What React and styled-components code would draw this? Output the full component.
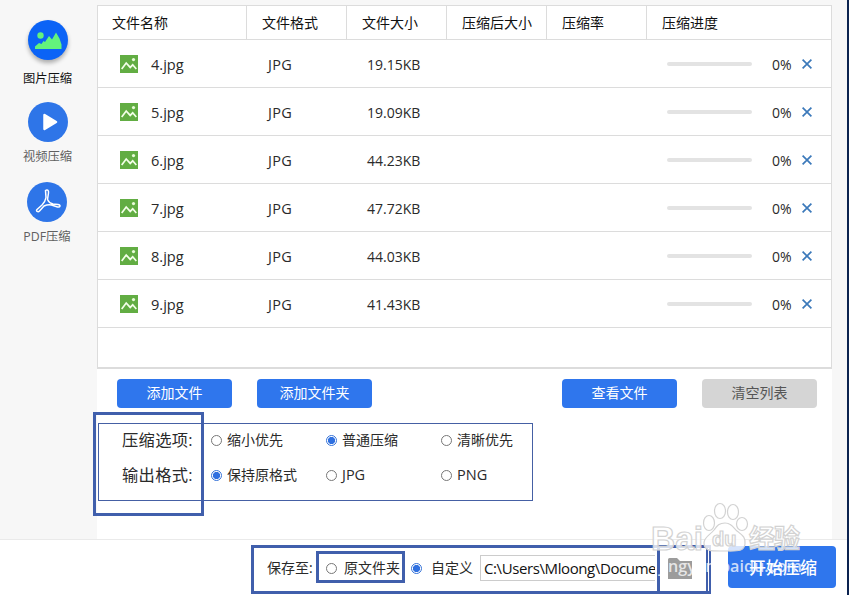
import React from 'react';
import styled, { createGlobalStyle } from 'styled-components';

const GlobalStyle = createGlobalStyle`
  * {
    box-sizing: border-box;
  }

  body {
    margin: 0;
    overflow: hidden;
    color: #2a2a2a;
    font-family: 'Open Sans', 'Noto Sans CJK SC', sans-serif;
    font-size: 14px;
    line-height: 20px;
  }
`;

const Window = styled.div`
  position: relative;
  display: grid;
  grid-template-columns: 97px 735px 15px;
  grid-template-rows: 539px 56px;
  width: 849px;
  height: 595px;
  overflow: hidden;
  background: #f7f7f7;
  border-right: 2px solid #0c2350;
  white-space: nowrap;
`;

const Sidebar = styled.nav`
  padding-top: 20px;
`;

const NavItem = styled.div`
  display: flex;
  flex-direction: column;
  align-items: center;
  height: ${({ $height }) => $height}px;
  padding-right: ${({ $shift }) => $shift || 2}px;
  color: ${({ $active }) => ($active ? '#111' : '#606060')};
  font-size: 12.3px;
`;

const NavIcon = styled.svg`
  display: block;
  width: 40px;
  height: 40px;
  border-radius: 50%;
  background: ${({ $active }) => ($active ? '#0b63f6' : '#2e75e8')};
  box-shadow: ${({ $active }) => ($active ? '0 3px 4px rgba(0, 0, 0, 0.3)' : 'none')};
`;

const NavLabel = styled.span`
  margin-top: ${({ $gap }) => $gap}px;
  line-height: 18px;
`;

const Main = styled.main`
  display: flex;
  flex-direction: column;
  padding-top: 5px;
  background: linear-gradient(#f7f7f7 5px, #fff 5px);
`;

const Table = styled.section`
  height: 364px;
  border: 1px solid #dcdcdc;
  border-bottom-width: 2px;
`;

const HeaderRow = styled.div`
  display: grid;
  grid-template-columns: 149px repeat(4, 100px) 1fr;
  height: 34px;
  border-bottom: 1px solid #dcdcdc;
`;

const HeaderCell = styled.div`
  padding: 7px 0 0 15px;
  color: #111;
  line-height: 20px;
  border-right: 1px solid #dcdcdc;

  &:first-child {
    padding-left: 14px;
  }

  &:last-child {
    border-right: none;
  }
`;

const FileRow = styled.div`
  display: grid;
  grid-template-columns: 31px 117px 99px 300px 105px 30px 10px;
  align-items: center;
  height: 48px;
  padding: 1px 0 0 22px;
  border-bottom: 1px solid #dcdcdc;
`;

const FileIcon = styled.svg`
  display: block;
  width: 18px;
  height: 18px;
`;

const FileName = styled.span`
  font-size: 14.6px;
`;

const FileText = styled.span`
  padding-top: 2px;
  letter-spacing: ${({ $spacing }) => $spacing || 0}px;
  font-size: ${({ $size }) => $size || 14}px;
`;

const Progress = styled.div`
  width: 85px;
  height: 4px;
  margin-top: -1px;
  border-radius: 2px;
  background: #e3e3e3;
`;

const RemoveIcon = styled.svg`
  display: block;
  width: 10px;
  height: 10px;
  stroke: #3b79ba;
  stroke-width: 1.7;
`;

const Toolbar = styled.div`
  display: flex;
  gap: 25px;
  padding: 10px 15px 0 20px;
`;

const Button = styled.button`
  width: 115px;
  height: 29px;
  margin-left: ${({ $push }) => ($push ? 'auto' : 0)};
  padding: 0 0 1px;
  border: none;
  border-radius: 4px;
  background: ${({ $muted }) => ($muted ? '#d5d5d5' : '#2f76ed')};
  color: ${({ $muted }) => ($muted ? '#555' : '#fff')};
  font: inherit;
`;

const Options = styled.section`
  width: 435px;
  height: 78px;
  margin: 15px 0 0 1px;
  padding-left: 23px;
  border: 1px solid #4560a4;
`;

const OptionRow = styled.div`
  display: grid;
  grid-template-columns: 89px 115px 115px 1fr;
  align-items: center;
  height: 35px;
  padding-bottom: 2px;
`;

const OptionTitle = styled.span`
  padding-bottom: 2px;
  font-size: 16.3px;
  letter-spacing: 0.3px;
`;

const RadioLabel = styled.label`
  display: flex;
  align-items: center;
  gap: ${({ $gap }) => $gap || 5}px;
`;

const Dot = styled.span`
  flex: none;
  width: 11px;
  height: 11px;
  border: 1px solid ${({ $on }) => ($on ? '#3472d8' : '#777')};
  border-radius: 50%;
  background: ${({ $on }) => ($on ? 'radial-gradient(circle, #2f70e0 3.2px, #fff 4px)' : '#fff')};
`;

const RadioText = styled.span`
  padding-bottom: ${({ $lift }) => $lift || 0}px;
  font-size: ${({ $latin }) => ($latin ? 14.5 : 14)}px;
`;

const Footer = styled.footer`
  display: flex;
  grid-column: 1 / -1;
  align-items: center;
  padding: 1px 0 0 267px;
  border-top: 1px solid #eaeaea;
  background: #fff;
`;

const SaveLabel = styled.span`
  width: 59px;
`;

const SaveRadio = styled.div`
  width: ${({ $width }) => $width}px;
`;

const PathField = styled.div`
  width: 175px;
  height: 26px;
  padding-left: 3px;
  overflow: hidden;
  border: 1px solid #ccc;
  border-right: none;
  color: #111;
  font-size: 15px;
  letter-spacing: -0.4px;
  line-height: 24px;
`;

const FolderIcon = styled.svg`
  width: 24px;
  height: 21px;
  margin-left: 13px;
  fill: #9c9c9c;
`;

const StartButton = styled.button`
  width: 108px;
  height: 42px;
  margin: -2px 0 0 36px;
  padding: 2px 0 0 2px;
  border: none;
  border-radius: 4px;
  background: #2f76ed;
  color: #fff;
  font: inherit;
  font-size: 17px;
  font-weight: 500;
`;

// Highlight frame drawn over the window content
const Marker = styled.div`
  position: absolute;
  left: ${({ $x }) => $x}px;
  top: ${({ $y }) => $y}px;
  width: ${({ $w }) => $w}px;
  height: ${({ $h }) => $h}px;
  border: 3px solid #405fac;
`;

const MarkerSplit = styled.div`
  position: absolute;
  left: 708px;
  top: 548px;
  width: 1px;
  height: 43px;
  background: #fff;
`;

const Watermark = styled.svg`
  position: absolute;
  left: 640px;
  top: 490px;
  width: 209px;
  height: 105px;
  font-family: 'Liberation Sans', 'Noto Sans CJK SC', sans-serif;
`;

const columns = ['文件名称', '文件格式', '文件大小', '压缩后大小', '压缩率', '压缩进度'];

const files = [
  { name: '4.jpg', size: '19.15KB' },
  { name: '5.jpg', size: '19.09KB' },
  { name: '6.jpg', size: '44.23KB' },
  { name: '7.jpg', size: '47.72KB' },
  { name: '8.jpg', size: '44.03KB' },
  { name: '9.jpg', size: '41.43KB' },
];

const optionRows = [
  { title: '压缩选项:', items: ['缩小优先', '普通压缩', '清晰优先'], selected: 1 },
  { title: '输出格式:', items: ['保持原格式', 'JPG', 'PNG'], selected: 0 },
];

const Radio = ({ label, on, gap, lift }) => (
  <RadioLabel $gap={gap}>
    <Dot $on={on} />
    <RadioText $lift={lift} $latin={/^[A-Z]+$/.test(label)}>{label}</RadioText>
  </RadioLabel>
);

const FileItem = ({ file }) => (
  <FileRow>
    <FileIcon viewBox="0 0 18 18">
      <rect width="18" height="18" fill="#62ad43" />
      <path d="M1.7 14 6.2 8l4 4.4 2.5-2.6 3.6 4.2" fill="none" stroke="#f4ffe9" strokeWidth="1.7" />
      <circle cx="13.5" cy="4.6" r="1.6" fill="#e9fbd9" />
    </FileIcon>
    <FileName>{file.name}</FileName>
    <FileText $size={14.5} $spacing={0.3}>JPG</FileText>
    <FileText>{file.size}</FileText>
    <Progress />
    <FileText>0%</FileText>
    <RemoveIcon viewBox="0 0 10 10">
      <path d="M.6.6 9.4 9.4M9.4.6.6 9.4" />
    </RemoveIcon>
  </FileRow>
);

const App = () => {
  return (
    <Window>
      <GlobalStyle />
      <Sidebar>
        <NavItem $active $height={82}>
          <NavIcon $active viewBox="0 0 40 40">
            <circle cx="12.5" cy="15.5" r="3.2" fill="#63f37c" />
            <path d="M7 29v-2.5l4-3.5 2.5 1 2-3 1.5 1 4-6 3 3.5 4-7 3.5 6 2 6v4.5z" fill="#63f37c" />
          </NavIcon>
          <NavLabel $gap={10}>图片压缩</NavLabel>
        </NavItem>
        <NavItem $height={80}>
          <NavIcon viewBox="0 0 40 40">
            <path d="M16.5 13v14l11.500-7z" fill="#fff" stroke="#fff" strokeWidth="2.5" strokeLinejoin="round" />
          </NavIcon>
          <NavLabel $gap={6}>视频压缩</NavLabel>
        </NavItem>
        <NavItem $height={70} $shift={3}>
          <NavIcon viewBox="0 0 40 40">
            <path
              d="M18.5 8.5c1.5-1.2 3.5-.5 3 2.5l-1 6.5c1 2.5 3 4 5.5 4.5l5 .5c3 .5 2.5 3-.5 2.5l-6-2c-2.5-.7-5-.2-7.5 1l-4.5 5c-1.5 1.5-4 0-2.5-1.5l5-4.5c2-2 3.5-4.5 4-7.5z"
              fill="none"
              stroke="#fff"
              strokeWidth="1.5"
              strokeLinejoin="round"
            />
          </NavIcon>
          <NavLabel $gap={6}>PDF压缩</NavLabel>
        </NavItem>
      </Sidebar>

      <Main>
        <Table>
          <HeaderRow>
            {columns.map((title) => (
              <HeaderCell key={title}>{title}</HeaderCell>
            ))}
          </HeaderRow>
          {files.map((file) => (
            <FileItem key={file.name} file={file} />
          ))}
        </Table>
        <Toolbar>
          <Button>添加文件</Button>
          <Button>添加文件夹</Button>
          <Button $push>查看文件</Button>
          <Button $muted>清空列表</Button>
        </Toolbar>
        <Options>
          {optionRows.map((row) => (
            <OptionRow key={row.title}>
              <OptionTitle>{row.title}</OptionTitle>
              {row.items.map((item, i) => (
                <Radio key={item} label={item} on={i === row.selected} lift={2} />
              ))}
            </OptionRow>
          ))}
        </Options>
      </Main>

      <Footer>
        <SaveLabel>保存至:</SaveLabel>
        <SaveRadio $width={85}>
          <Radio label="原文件夹" gap={7} />
        </SaveRadio>
        <SaveRadio $width={69}>
          <Radio label="自定义" gap={9} on />
        </SaveRadio>
        <PathField>C:\Users\Mloong\Documents</PathField>
        <FolderIcon viewBox="0 0 24 21">
          <path d="M0 1.5Q0 0 1.5 0H9l3 3h12v18H0z" />
        </FolderIcon>
        <StartButton>开始压缩</StartButton>
      </Footer>

      <Marker $x={93} $y={412} $w={111} $h={104} />
      <Marker $x={251} $y={545} $w={460} $h={49} />
      <Marker $x={316} $y={551} $w={89} $h={32} />
      <Marker $x={657} $y={545} $w={52} $h={49} />
      <MarkerSplit />

      <Watermark viewBox="0 0 209 105">
        <g fill="#fff" fillOpacity="0.8" stroke="#d2d2d2" strokeWidth="1.2">
          <text x="11" y="60" fontSize="34" fontWeight="700" textLength="52" lengthAdjust="spacingAndGlyphs">Bai</text>
          <ellipse cx="69" cy="33" rx="5.5" ry="7.5" />
          <ellipse cx="80" cy="21" rx="5.5" ry="7.5" />
          <ellipse cx="93" cy="22" rx="5.5" ry="7.5" />
          <ellipse cx="102" cy="34" rx="5.5" ry="6.5" />
          <path d="M85 33c6 0 8 4 12 8 5 4 9 6 8 13-1 8-8 7-20 7s-21 1-21-8c0-6 6-8 10-13 3-4 5-7 11-7z" />
          <text x="72" y="56" fontSize="20" fontWeight="700">du</text>
          <text x="109" y="58" fontSize="26" fontWeight="700" textLength="51">经验</text>
        </g>
        <text
          x="19"
          y="82"
          fontSize="16.5"
          fontFamily="'Open Sans', sans-serif"
          fontWeight="600"
          fill="#fff"
          fillOpacity="0.75"
          textLength="143"
          lengthAdjust="spacingAndGlyphs"
        >
          jingyan.baidu.com
        </text>
      </Watermark>
    </Window>
  );
};

export default App;
